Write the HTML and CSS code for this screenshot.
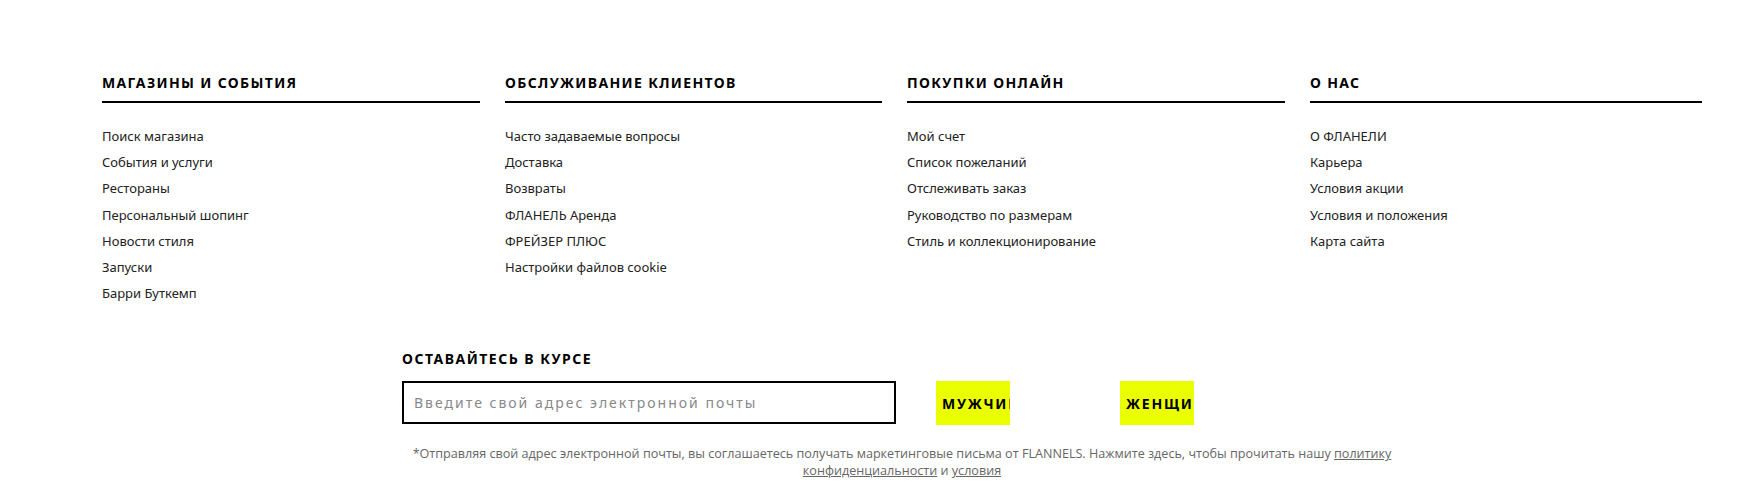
FILE: index.html
```html
<!DOCTYPE html>
<html lang="ru">
<head>
  <meta charset="UTF-8">
  <meta name="viewport" content="width=device-width, initial-scale=1.0">
  <title>FLANNELS</title>
  <link rel="stylesheet" href="styles.css">
</head>
<body>
  <footer class="footer">
    <div class="footer-columns">
      <div class="footer-col">
        <h3 class="col-title">МАГАЗИНЫ И СОБЫТИЯ</h3>
        <ul class="col-links">
          <li><a href="#">Поиск магазина</a></li>
          <li><a href="#">События и услуги</a></li>
          <li><a href="#">Рестораны</a></li>
          <li><a href="#">Персональный шопинг</a></li>
          <li><a href="#">Новости стиля</a></li>
          <li><a href="#">Запуски</a></li>
          <li><a href="#">Барри Буткемп</a></li>
        </ul>
      </div>
      <div class="footer-col">
        <h3 class="col-title">ОБСЛУЖИВАНИЕ КЛИЕНТОВ</h3>
        <ul class="col-links">
          <li><a href="#">Часто задаваемые вопросы</a></li>
          <li><a href="#">Доставка</a></li>
          <li><a href="#">Возвраты</a></li>
          <li><a href="#">ФЛАНЕЛЬ Аренда</a></li>
          <li><a href="#">ФРЕЙЗЕР ПЛЮС</a></li>
          <li><a href="#">Настройки файлов cookie</a></li>
        </ul>
      </div>
      <div class="footer-col">
        <h3 class="col-title">ПОКУПКИ ОНЛАЙН</h3>
        <ul class="col-links">
          <li><a href="#">Мой счет</a></li>
          <li><a href="#">Список пожеланий</a></li>
          <li><a href="#">Отслеживать заказ</a></li>
          <li><a href="#">Руководство по размерам</a></li>
          <li><a href="#">Стиль и коллекционирование</a></li>
        </ul>
      </div>
      <div class="footer-col col-wide">
        <h3 class="col-title">О НАС</h3>
        <ul class="col-links">
          <li><a href="#">О ФЛАНЕЛИ</a></li>
          <li><a href="#">Карьера</a></li>
          <li><a href="#">Условия акции</a></li>
          <li><a href="#">Условия и положения</a></li>
          <li><a href="#">Карта сайта</a></li>
        </ul>
      </div>
    </div>

    <!-- Newsletter signup -->
    <div class="newsletter">
      <h3 class="newsletter-title">ОСТАВАЙТЕСЬ В КУРСЕ</h3>
      <form class="newsletter-form" onsubmit="return false">
        <input type="email" class="email-input" placeholder="Введите свой адрес электронной почты">
        <div class="gender-buttons">
          <button class="gender-btn">МУЖЧИНЫ</button>
          <button class="gender-btn">ЖЕНЩИНЫ</button>
        </div>
      </form>
      <p class="disclaimer">*Отправляя свой адрес электронной почты, вы соглашаетесь получать маркетинговые письма от FLANNELS. Нажмите здесь, чтобы прочитать нашу <a href="#">политику конфиденциальности</a> и <a href="#">условия</a></p>
    </div>
  </footer>
</body>
</html>
```

FILE: styles.css
```css
body {
  margin: 0;
  background-color: #fff;
  font-family: "Noto Sans", "Open Sans", sans-serif;
  color: #111;
}

.footer {
  padding: 73px 0 0 102px;
}

.footer-columns {
  display: grid;
  grid-template-columns: 378px 377px 378px 392px;
  column-gap: 25px;
}

.col-title {
  margin: 0;
  padding-bottom: 8px;
  border-bottom: 2px solid #000;
  font-size: 14px;
  line-height: 20px;
  font-weight: 700;
  letter-spacing: 1.35px;
  color: #000;
}

.col-links {
  list-style: none;
  margin: 20px 0 0;
  padding: 0;
}

.col-links li {
  line-height: 26.2px;
  font-size: 13px;
}

.col-links a {
  color: #222;
  text-decoration: none;
}

/* Newsletter */
.newsletter {
  width: 1000px;
  margin: 43px 0 0 300px;
}

.newsletter-title {
  margin: 0;
  font-size: 14px;
  line-height: 20px;
  font-weight: 700;
  letter-spacing: 1.5px;
  color: #000;
}

.newsletter-form {
  display: flex;
  margin-top: 12px;
}

.email-input {
  box-sizing: border-box;
  width: 494px;
  height: 43px;
  padding: 0 10px;
  border: 2px solid #000;
  outline: none;
  font-family: inherit;
  font-size: 14px;
  letter-spacing: 2px;
}

.email-input::placeholder {
  color: #888;
}

.gender-buttons {
  display: flex;
  gap: 110px;
  margin-left: 40px;
}

.gender-btn {
  width: 74px;
  height: 44px;
  padding: 0 0 0 6px;
  border: none;
  background-color: #eaff00;
  font-family: inherit;
  font-size: 14px;
  font-weight: 700;
  letter-spacing: 1.8px;
  color: #000;
  text-align: left;
  white-space: nowrap;
  overflow: hidden;
  cursor: pointer;
}

.disclaimer {
  margin: 20px 0 0;
  font-family: "Open Sans", sans-serif;
  font-size: 12.6px;
  line-height: 17px;
  text-align: center;
  color: #666;
}

.disclaimer a {
  color: #666;
}
```
